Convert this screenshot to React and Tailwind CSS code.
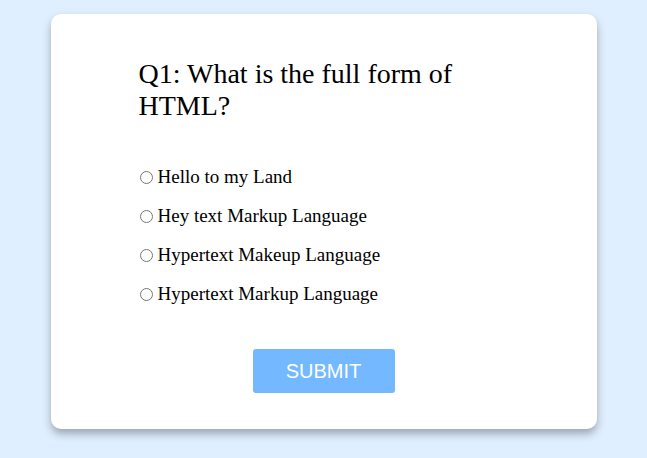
const options = [
  'Hello to my Land',
  'Hey text Markup Language',
  'Hypertext Makeup Language',
  'Hypertext Markup Language',
]

export default function App() {
  return (
    <div className="min-h-screen w-full bg-[#e0efff] pt-[14px]">
      <div className="mx-auto w-[546px] rounded-[10px] bg-white px-[88px] pt-[44px] pb-[36px] shadow-[0_5px_8px_rgba(0,0,0,0.3)]">
        <h2 className="font-['Liberation_Serif',serif] text-[28px] leading-[32px] text-black">
          Q1: What is the full form of HTML?
        </h2>

        <div className="mt-[44px] flex flex-col gap-[17px]">
          {options.map((opt) => (
            <label
              key={opt}
              className="flex items-center font-['Liberation_Serif',serif] text-[19px] leading-[22px] text-black"
            >
              <input type="radio" name="q1" className="ml-px mr-[5px] h-[13px] w-[13px]" />
              {opt}
            </label>
          ))}
        </div>

        <div className="mt-[44px] flex justify-center">
          <button className="h-[44px] w-[142px] rounded-[3px] bg-[#74b9ff] font-['Liberation_Sans',Arial,sans-serif] text-[20px] text-white">
            SUBMIT
          </button>
        </div>
      </div>
    </div>
  )
}
